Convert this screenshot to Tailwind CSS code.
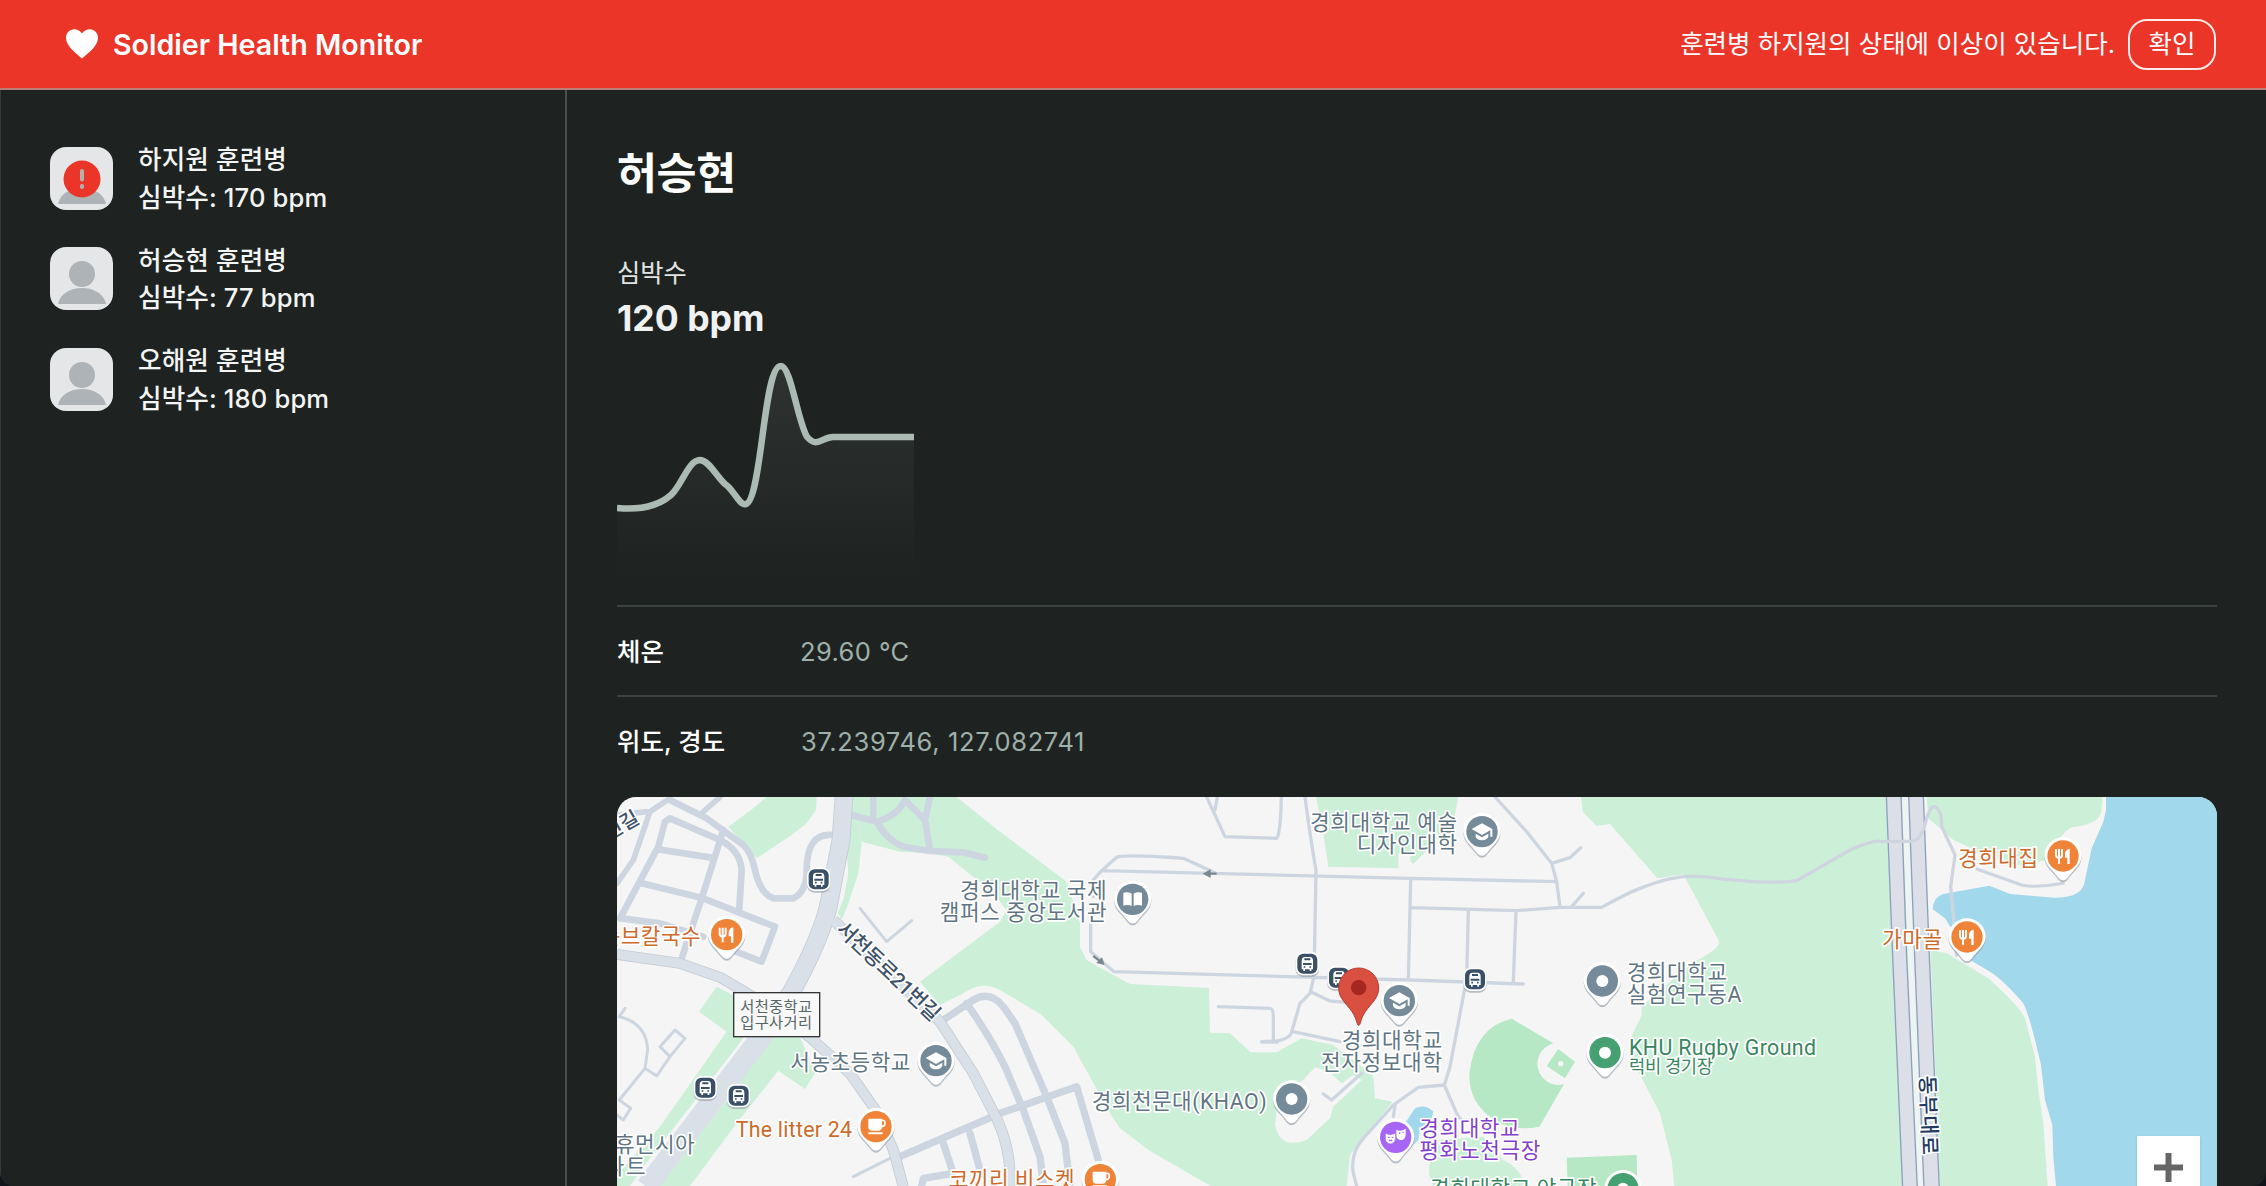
<!DOCTYPE html>
<html lang="ko" class="text-[25.14px]">
<head>
<meta charset="utf-8">
<title>Soldier Health Monitor</title>
<script src="https://cdn.jsdelivr.net/npm/@tailwindcss/browser@4"></script>
</head>
<body class="h-screen overflow-hidden bg-[#12161c] font-['Inter','Noto_Sans_CJK_KR',sans-serif] text-white">
<div class="flex h-screen flex-col overflow-hidden rounded-b-[14px] bg-[#1e2321]">
  <header class="flex h-[90px] shrink-0 items-center justify-between border-b-2 border-[#b97f77] bg-[#ec3529] pl-[66px] pr-[50px]">
    <div class="flex items-center gap-[15px]">
      <svg class="h-[30px] w-[32px]" viewBox="0 0 32 30" fill="#fff"><path d="M16 29.500C11 25 0 17.500 0 8.800 0 4 3.600 .3 8.300 .3c3.200 0 6 1.600 7.700 4.300C17.700 1.900 20.500 .3 23.700 .3 28.400 .3 32 4 32 8.800 32 17.500 21 25 16 29.500z"/></svg>
      <h1 class="pt-[2px] text-[28.6px] font-semibold">Soldier Health Monitor</h1>
    </div>
    <div class="flex items-center gap-[13px]">
      <p class="text-[25.5px]">훈련병 하지원의 상태에 이상이 있습니다.</p>
      <button class="h-[51px] w-[88px] rounded-[19px] border-2 border-white/90 text-[25.5px] leading-none">확인</button>
    </div>
  </header>
  <div class="flex min-h-0 flex-1 border-l border-[#343a38]">
    <aside class="w-[566px] shrink-0 border-r-2 border-[#4a4f4d] pl-[49px] pt-[50.5px]">
      <ul class="flex flex-col gap-[25.1px] text-[25.6px] font-medium leading-[37.7px] tracking-[0.005em] text-[#f3f4f4]">
        <li class="flex h-[75.4px] items-center gap-[25px]">
          <svg class="size-[63px]" viewBox="0 0 63 63"><rect width="63" height="63" rx="16" fill="#e4e6e8"/><circle cx="32" cy="27" r="13" fill="#adb3b6"/><path d="M8 57C10 47 20 41 32 41s22 6 24 16z" fill="#adb3b6"/><circle cx="32" cy="32" r="18.500" fill="#ec3529"/><path d="M32 24v8.500M32 39v1" stroke="#b4b0b0" stroke-width="4" stroke-linecap="round"/></svg>
          <div class="pt-[1.500px]"><p>하지원 훈련병</p><p>심박수: 170 bpm</p></div>
        </li>
        <li class="flex h-[75.4px] items-center gap-[25px]">
          <svg class="size-[63px]" viewBox="0 0 63 63"><rect width="63" height="63" rx="16" fill="#e4e6e8"/><circle cx="32" cy="27" r="13" fill="#adb3b6"/><path d="M8 57C10 47 20 41 32 41s22 6 24 16z" fill="#adb3b6"/></svg>
          <div class="pt-[1.500px]"><p>허승현 훈련병</p><p>심박수: 77 bpm</p></div>
        </li>
        <li class="flex h-[75.4px] items-center gap-[25px]">
          <svg class="size-[63px]" viewBox="0 0 63 63"><rect width="63" height="63" rx="16" fill="#e4e6e8"/><circle cx="32" cy="27" r="13" fill="#adb3b6"/><path d="M8 57C10 47 20 41 32 41s22 6 24 16z" fill="#adb3b6"/></svg>
          <div class="pt-[1.500px]"><p>오해원 훈련병</p><p>심박수: 180 bpm</p></div>
        </li>
      </ul>
    </aside>
    <main class="flex min-w-0 flex-1 flex-col pl-[50px] pr-[49px] pt-[55px]">
      <h2 class="text-[43.5px] font-bold leading-[56px] tracking-[-0.01em]">허승현</h2>
      <p class="mt-[53px] text-[25.3px] leading-[38px] text-[#e2e4e3]">심박수</p>
      <p class="mt-[2px] text-[35.600px] font-bold leading-[50px] text-[#f0f1f1]">120 bpm</p>
      <svg class="mt-[11px] h-[232px] w-[297px]" viewBox="617 355 297 232" fill="none">
        <defs><linearGradient id="fade" x1="0" x2="0" y1="0" y2="1"><stop stop-color="#2e3331"/><stop offset=".45" stop-color="#272c2a"/><stop offset="1" stop-color="#1e2321"/></linearGradient></defs>
        <path d="M617 508C632 509.500 655 509 671 495C682 485 688 461 699.500 460C709 460 716 476 725 484C733 489 739 504.500 745 504.300C762 504 763 366 780.700 366C791 366 797 419 806.800 436.500C817 449 822 437 833 437H914V575H617z" fill="url(#fade)"/>
        <path d="M617 508C632 509.500 655 509 671 495C682 485 688 461 699.500 460C709 460 716 476 725 484C733 489 739 504.500 745 504.300C762 504 763 366 780.700 366C791 366 797 419 806.800 436.500C817 449 822 437 833 437H914" stroke="#abbab3" stroke-width="6.500"/>
      </svg>
      <dl class="mt-[18px] text-[25.5px]">
        <div class="flex h-[90px] items-center border-t-2 border-[#3b4240] pt-[2px]"><dt class="w-[183px] font-medium">체온</dt><dd class="tracking-[0.4px] text-[#9fb0aa]">29.60 °C</dd></div>
        <div class="flex h-[90px] items-center border-t-2 border-[#3b4240] pt-[2px]"><dt class="w-[184px] font-medium">위도, 경도</dt><dd class="tracking-[0.65px] text-[#9fb0aa]">37.239746, 127.082741</dd></div>
      </dl>
      <section class="relative mt-[12px] h-[389px] w-[1600px] shrink-0 overflow-hidden rounded-t-[19px] bg-[#f5f5f5]">
        <svg class="block h-[389px] w-[1600px]" viewBox="21 21 4800 1167" fill="none" font-family="Roboto, 'Noto Sans CJK KR', sans-serif">
          <defs>
            <g id="pin"><path d="M-56 2A56 56 0 1 1 56 2C54 30 32 42 14 67Q0 82-14 67C-32 42-54 30-56 2z" fill="#8c98a5" opacity=".6" transform="translate(0 4)"/><path d="M-56 0A56 56 0 1 1 56 0C54 28 32 40 14 65Q0 80-14 65C-32 40-54 28-56 0z" fill="#fff"/></g>
            <g id="food"><use href="#pin"/><circle r="47" fill="#ef8438"/><path d="M-21-21v18q0 8 8 8M-12-21v44M-3-21v18q0 8-8 8" stroke="#fff" stroke-width="6"/><path d="M20-22v46h-7V5H6V-8Q8-20 20-22z" fill="#fff"/></g>
            <g id="cafe"><use href="#pin"/><circle r="47" fill="#ef8438"/><path d="M-23-24H18V0Q18 12 6 12H-11Q-23 12-23 0z M-23 17H20v6H-23z" fill="#fff"/><path d="M17-19q11-1 10 9t-11 10" stroke="#fff" stroke-width="5"/></g>
            <g id="school"><use href="#pin"/><circle r="47" fill="#758b99"/><path d="M-31-8 0-25 31-8V15H25V-4L0 10z M-19 6v10q6 10 19 10t19-10V6L0 17z" fill="#fff"/></g>
            <g id="spot"><use href="#pin"/><circle r="47" fill="#758b99"/><circle r="18" fill="#fff"/></g>
            <g id="park"><use href="#pin"/><circle r="47" fill="#45a072"/><circle r="18" fill="#fff"/></g>
            <g id="bus"><rect x="-35" y="-32" width="70" height="72" rx="22" fill="#8c98a5" opacity=".6"/><rect x="-35" y="-35" width="70" height="70" rx="22" fill="#fff"/><rect x="-30" y="-30" width="60" height="60" rx="18" fill="#3a4f68"/><path d="M-17-8Q-17-20-8-20H8Q17-20 17-8V17H12V22H7V17H-7V22H-12V17H-17z" fill="#fff"/><path d="M-9-13H9M-13 1H13" stroke="#3a4f68" stroke-width="6"/><path d="M-11 10h5M6 10h5" stroke="#3a4f68" stroke-width="5"/></g>
          </defs>
          <!-- parks and woods -->
          <g fill="#ccefd8">
            <path d="M470 21H620L618 60 590 100 545 135 440 205 355 110 420 62z"/>
            <path d="M725 21 755 155 745 250 715 340 695 390 683 368 700 330 715 250 710 180z"/>
            <path d="M725 21H1040L1170 125 1370 275 1410 400V470L1430 510 1510 555 1560 582 1797 594 1800 728 1860 730 1922 787H2000L2075 745 2170 765 2255 830 2290 860 2295 925 2348 935 2270 1030 2220 1095 2210 1188H1802L1620 1083 1530 1015 1500 970 1390 770 1295 675 1170 600 Q1115 570 1060 610L990 645 930 575 1170 395 1190 360 1150 310 1090 260 1015 200 965 190 870 185 755 155z"/>
            <path d="M320 590 440 650 400 745 350 810 100 1130 60 1188H21V1155L150 1010 350 725 267 665z"/>
            <path d="M460 740H570L615 850 585 897 505 842 380 1000 240 1188H150L350 930z"/>
            <path d="M2118 21H2545L2530 100 2410 222 2402 215 2400 190H2365V235L2155 230 2140 130z"/>
            <path d="M2913 21 2918 65 2960 108 3000 102 3142 265 3220 253 3328 455 Q3330 475 3255 515L3150 600 3095 650V675L3062 745V800L3150 970 3185 1110 3193 1188H4313L4300 1000 4285 900 4275 800 4245 685Q4230 650 4135 565L4010 490 3960 480 3940 21z"/>
            <path d="M3950 21H4478L4473 70Q4460 105 4385 112 4350 130 4310 210L4230 225 4130 195 4030 150 3955 85z"/>
            <path d="M2460 1120 2490 1050 2620 1040 2680 1110Q2740 1140 2740 1188H2470Q2450 1150 2460 1120z"/>
          </g>
          <path d="M2115 832Q2160 840 2195 880L2230 855 2255 870 2170 950 2160 985 2090 1050Q2010 1080 1995 1005L2000 960 2070 880z" fill="#f5f5f5"/>
          <g fill="#b6e8c5"><path d="M2705 686 2830 760A60 60 0 0 0 2862 883L2788 1010Q2740 1020 2690 1008 2575 960 2578 850 2595 710 2705 686z"/><path d="M2845 777 2895 815 2865 865 2810 828z"/><path d="M2870 1103 3080 1095 3082 1188H2873z"/></g>
          <circle cx="2852" cy="821" r="8" fill="#f5f5f5"/>
          <!-- water -->
          <path d="M4488 21V60L4480 95 4445 175 4425 270Q4420 325 4330 323L4200 312 4138 287 4000 312Q3970 320 3968 358L4005 385 4040 440 4080 510 4140 545Q4180 570 4240 640 4260 680 4293 825L4305 930 4327 1005 4330 1100 4338 1188H4822V21z" fill="#a1d8eb"/>
          <path d="M2385 1000 2415 955Q2445 940 2470 965L2465 985 2430 1015 2425 1050 2400 1075z" fill="#a1d8eb"/>
          <!-- minor streets -->
          <g stroke="#cdd6e0" stroke-linejoin="round" stroke-linecap="round">
            <g stroke-width="22">
              <path d="M180 30 290 85 400 165Q425 190 435 240 450 310 490 325H550Q590 305 590 240 590 130 665 135" stroke-width="20"/>
              <path d="M180 25 120 65 70 210 21 280M280 65 330 21M21 75 110 65" stroke-width="17"/>
              <path d="M30 385 145 170 165 95 180 85 330 150Q390 180 395 240L388 355M340 120 280 310 215 505M145 178 305 203M95 280 280 325 495 410 455 515 340 470M35 385 150 400 280 440" stroke-width="20"/>
              <path d="M725 75 800 95Q860 80 885 30L945 90 960 180M790 90V21M960 21 945 90M800 95Q830 150 880 170L960 183 1060 187 1125 203" stroke-width="20"/>
              <path d="M1000 690 1090 630Q1140 600 1180 650L1215 700 1310 920 1365 1060 1380 1188M1070 640Q1140 740 1185 830L1240 960 1290 1100 1300 1188M870 1100 1170 970 1400 890 1465 1110M1000 1060 1030 1150 940 1165 935 1188M1080 1030 1110 1140"/>
            </g>
            <g stroke-width="9"><path d="M750 355 830 455 905 392M730 1160 850 1100M45 655 28 680Q110 700 113 780L105 835 28 930M105 835 140 858 180 800M195 720 150 770 180 800 225 745zM28 930 62 955 40 990 21 975"/></g>
            <g stroke-width="10">
              <path d="M1450 320V270L1475 242 1520 202Q1545 192 1720 205L1815 248M1475 242 2400 265 2840 275M1442 400V485L1512 545 2400 570 2740 582M1790 21 1845 140 2000 145Q2012 130 2014 21M1822 21 1815 60M2085 21Q2105 170 2118 240L2112 560 2100 610 2070 640 2045 725Q2040 755 1955 755M1955 756H2003 1990V680Q1990 655 1980 655L1825 650M2050 725 2190 755M2105 607 2160 633 2210 637M2402 270 2395 570M2402 353 2720 362 2850 352H2975Q3050 310 3090 295 3200 250 3280 260M2575 362 2570 565 2520 830 2503 885 2540 970 2550 985M2718 365 2710 575M2655 21 2750 125 2825 220 2840 275 2850 350M2825 220 2880 203 2912 173M2885 350 2920 310M2503 885 2425 892 2350 945 2260 1045Q2220 1090 2230 1150L2240 1188M2355 945 2350 980M2255 850 2165 930 2140 912"/>
              <path d="M4100 237 4235 285Q4270 295 4360 280" stroke-width="9"/>
            </g>
          </g>
          <!-- main roads -->
          <g stroke-linejoin="round">
            <g stroke="#c3ccd6">
              <path d="M21 493 210 520 330 562 480 650 600 742 720 850 800 965 850 1080 880 1190M670 390 990 695 1090 850 1160 985Q1205 1080 1200 1190" stroke-width="33"/>
              <path d="M702 21 693 150 655 350Q630 450 545 605L450 745 110 1190" stroke-width="56"/>
            </g>
            <g stroke="#d9e0e7">
              <path d="M21 493 210 520 330 562 480 650 600 742 720 850 800 965 850 1080 880 1190M670 390 990 695 1090 850 1160 985Q1205 1080 1200 1190" stroke-width="28"/>
              <path d="M702 21 693 150 655 350Q630 450 545 605L450 745 110 1190" stroke-width="51"/>
              <path d="M470 720 110 1190" stroke-width="64"/>
            </g>
          </g>
          <path d="M3875 21 3943 21 3990 1188H3920z" fill="#eef4f1"/>
          <g fill="#dcdfe7" stroke="#8ca1bd" stroke-width="4"><path d="M3829 15 3873 15 3890 500 3922 1195H3878L3848 500z"/><path d="M3896 15 3940 15 3958 500 3988 1195H3942L3914 500z"/></g>
          <path d="M3280 260Q3470 285 3560 272L3720 180Q3790 150 3810 154H3900Q3935 155 3950 85 3970 20 3993 75L3995 110 4035 195 4022 290 4035 430 4040 500" stroke="#cfd5df" stroke-width="10"/>
          <!-- one-way arrows -->
          <path d="M1820 251H1792M1450 498 1472 515" stroke="#7b8891" stroke-width="7"/><path d="M1778 251 1802 238V264zM1484 525 1476 502 1459 519z" fill="#7b8891"/>
          <!-- stops and places -->
          <use href="#bus" x="626" y="268"/><use href="#bus" x="286" y="893"/><use href="#bus" x="386" y="917"/><use href="#bus" x="2092" y="521"/><use href="#bus" x="2187" y="563"/><use href="#bus" x="2595" y="568"/>
          <use href="#food" x="350" y="434"/><use href="#food" x="4359" y="198"/><use href="#food" x="4071" y="441"/>
          <use href="#cafe" x="798" y="1010"/><use href="#cafe" x="1471" y="1169"/>
          <use href="#school" x="978" y="812"/><use href="#school" x="2368" y="632"/><use href="#school" x="2616" y="125"/>
          <use href="#spot" x="2045" y="927"/><use href="#spot" x="2977" y="573"/>
          <use href="#park" x="2985" y="788"/><use href="#park" x="3039" y="1196"/>
          <g transform="translate(1568 328)"><use href="#pin"/><circle r="47" fill="#758b99"/><path d="M-28-20Q-14-24-3-17V20Q-14 14-28 19zM28-20Q14-24 3-17V20Q14 14 28 19z" fill="#fff"/></g>
          <g transform="translate(2357 1042)"><use href="#pin"/><circle r="47" fill="#a866f5"/><path d="M2-22q14 6 28-4v20q-2 13-13 15Q2 8 2-6z" fill="#fff"/><path d="M-31-12q14 8 31 0v17q-3 13-15 15-14-1-16-15z" fill="#fff" stroke="#a866f5" stroke-width="2"/><path d="M-23 0h5M-12 0h5M-20 8q5 4 9 0M10-13h4M20-15h4" stroke="#a866f5" stroke-width="4"/></g>
          <g transform="translate(2246 593)"><path d="M0 113C-6 113-4 96-20 72-38 46-60 32-60 1A60 60 0 1 1 60 1C60 32 38 46 20 72 4 96 6 113 0 113z" fill="#d94f40" stroke="#b93a30" stroke-width="3"/><circle r="23" fill="#a52720"/></g>
          <rect x="371" y="608" width="258" height="132" fill="#f8f8f8" stroke="#333" stroke-width="4"/>
          <g stroke="#fff" stroke-width="10" stroke-linejoin="round" paint-order="stroke" font-size="64">
            <g fill="#566" stroke="none" font-size="46"><text x="391" y="667" textLength="215">서천중학교</text><text x="391" y="714" textLength="215">입구사거리</text></g>
            <g fill="#5f7583">
              <text x="541" y="841" textLength="360">서농초등학교</text>
              <text x="1050" y="323" textLength="440">경희대학교 국제</text><text x="989" y="389" textLength="501">캠퍼스 중앙도서관</text>
              <text x="2100" y="120" textLength="441">경희대학교 예술</text><text x="2240" y="186" textLength="301">디자인대학</text>
              <text x="1445" y="957" textLength="525">경희천문대(KHAO)</text>
              <text x="2195" y="775" textLength="301">경희대학교</text><text x="2133" y="841" textLength="363">전자정보대학</text>
              <text x="3050" y="569" textLength="301">경희대학교</text><text x="3050" y="635" textLength="344">실험연구동A</text>
              <text x="15" y="1085" textLength="239">휴먼시아</text><text x="-16" y="1151" textLength="123">파트</text>
            </g>
            <g fill="#cf6a2a">
              <text x="-28" y="462" textLength="300">눈브칼국수</text><text x="377" y="1042" textLength="349">The litter 24</text><text x="1016" y="1190" textLength="378">코끼리 비스켓</text>
              <text x="4044" y="227" textLength="240">경희대집</text><text x="3816" y="470" textLength="180">가마골</text>
            </g>
            <g fill="#38865f"><text x="3057" y="795" textLength="561">KHU Rugby Ground</text><text x="3057" y="848" font-size="53" textLength="252">럭비 경기장</text><text x="2460" y="1219" textLength="500">경희대학교 야구장</text></g>
            <g fill="#8540cc"><text x="2428" y="1039" textLength="301">경희대학교</text><text x="2428" y="1105" textLength="363">평화노천극장</text></g>
            <g fill="#3f5168" font-weight="500">
              <text transform="translate(676 422) rotate(43.500)" font-size="62" textLength="400">서천동로21번길</text>
              <text transform="translate(92 96) rotate(-30)" font-size="60" text-anchor="end">천길</text>
              <text transform="translate(3930 857) rotate(88)" font-size="62" textLength="238" fill="#203a60">동부대로</text>
            </g>
          </g>
        </svg>
        <button class="absolute right-[17px] top-[339px] flex size-[63px] items-center justify-center bg-white shadow" aria-label="확대"><svg class="size-[29px]" viewBox="0 0 29 29"><path d="M14.500 0v29M0 14.500h29" stroke="#666" stroke-width="6"/></svg></button>
      </section>
    </main>
  </div>
</div>
</body>
</html>
